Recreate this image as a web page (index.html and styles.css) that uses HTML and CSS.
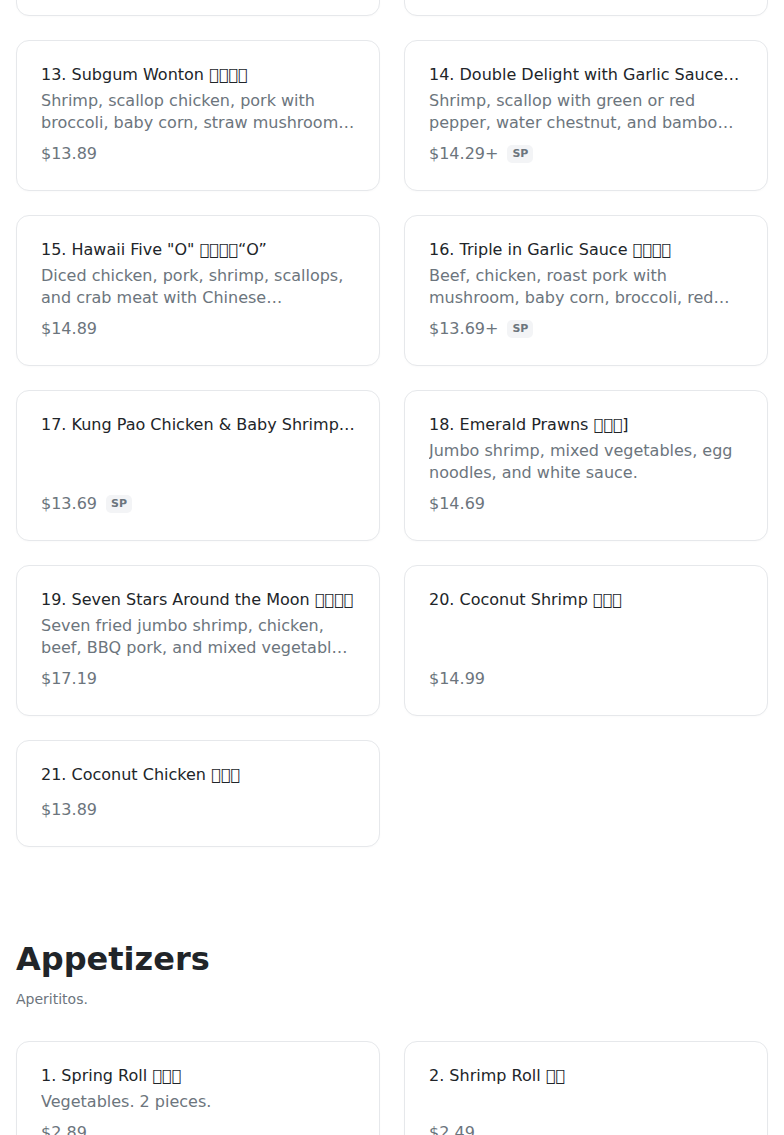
FILE: index.html
```html
<!DOCTYPE html>
<html lang="en">
<head>
<meta charset="utf-8">
<title>Menu</title>
<link rel="stylesheet" href="styles.css">
</head>
<body>
<main class="menu">
  <section class="section section-first">
    <div class="grid">
      <article class="card">
        <h3 class="item-title">11. Sesame Chicken</h3>
        <p class="item-desc">Crispy chicken with sesame seeds in a sweet brown sauce and steamed broccoli.</p>
        <div class="item-price"><span>$13.29</span></div>
      </article>
      <article class="card">
        <h3 class="item-title">12. General Tso's Chicken</h3>
        <p class="item-desc">Chunks of chicken sautéed in a spicy sauce with steamed broccoli.</p>
        <div class="item-price"><span>$13.29</span></div>
      </article>
      <article class="card">
        <h3 class="item-title">13. Subgum Wonton &#xE000;&#xE001;&#xE002;&#xE003;</h3>
        <p class="item-desc">Shrimp, scallop chicken, pork with broccoli, baby corn, straw mushrooms, snow peas and wonton skins.</p>
        <div class="item-price"><span>$13.89</span></div>
      </article>
      <article class="card">
        <h3 class="item-title">14. Double Delight with Garlic Sauce &#xE004;&#xE005;&#xE006;&#xE007;</h3>
        <p class="item-desc">Shrimp, scallop with green or red pepper, water chestnut, and bamboo shoots in garlic sauce.</p>
        <div class="item-price"><span>$14.29+</span><span class="badge">SP</span></div>
      </article>
      <article class="card">
        <h3 class="item-title">15. Hawaii Five "O" &#xE008;&#xE009;&#xE00A;&#xE00B;“O”</h3>
        <p class="item-desc">Diced chicken, pork, shrimp, scallops, and crab meat with Chinese vegetables in brown sauce.</p>
        <div class="item-price"><span>$14.89</span></div>
      </article>
      <article class="card">
        <h3 class="item-title">16. Triple in Garlic Sauce &#xE00C;&#xE00D;&#xE00E;&#xE00F;</h3>
        <p class="item-desc">Beef, chicken, roast pork with mushroom, baby corn, broccoli, red pepper and water chestnuts.</p>
        <div class="item-price"><span>$13.69+</span><span class="badge">SP</span></div>
      </article>
      <article class="card">
        <h3 class="item-title">17. Kung Pao Chicken &amp; Baby Shrimp &#xE010;&#xE011;&#xE012;&#xE013;&#xE014;</h3>
        <div class="item-price"><span>$13.69</span><span class="badge">SP</span></div>
      </article>
      <article class="card">
        <h3 class="item-title">18. Emerald Prawns &#xE015;&#xE016;&#xE017;]</h3>
        <p class="item-desc">Jumbo shrimp, mixed vegetables, egg noodles, and white sauce.</p>
        <div class="item-price"><span>$14.69</span></div>
      </article>
      <article class="card">
        <h3 class="item-title">19. Seven Stars Around the Moon &#xE018;&#xE019;&#xE01A;&#xE01B;</h3>
        <p class="item-desc">Seven fried jumbo shrimp, chicken, beef, BBQ pork, and mixed vegetables in brown sauce.</p>
        <div class="item-price"><span>$17.19</span></div>
      </article>
      <article class="card">
        <h3 class="item-title">20. Coconut Shrimp &#xE01C;&#xE01D;&#xE01E;</h3>
        <div class="item-price"><span>$14.99</span></div>
      </article>
      <article class="card">
        <h3 class="item-title">21. Coconut Chicken &#xE01F;&#xE020;&#xE021;</h3>
        <div class="item-price"><span>$13.89</span></div>
      </article>
    </div>
  </section>

  <section class="section">
    <h2 class="section-title">Appetizers</h2>
    <p class="section-sub">Aperititos.</p>
    <div class="grid">
      <article class="card">
        <h3 class="item-title">1. Spring Roll &#xE022;&#xE023;&#xE024;</h3>
        <p class="item-desc">Vegetables. 2 pieces.</p>
        <div class="item-price"><span>$2.89</span></div>
      </article>
      <article class="card">
        <h3 class="item-title">2. Shrimp Roll &#xE025;&#xE026;</h3>
        <div class="item-price"><span>$2.49</span></div>
      </article>
      <article class="card">
        <h3 class="item-title">3. Egg Roll &#xE027;&#xE028;</h3>
        <div class="item-price"><span>$2.49</span></div>
      </article>
      <article class="card">
        <h3 class="item-title">4. Crab Rangoon &#xE029;&#xE02A;&#xE02B;</h3>
        <div class="item-price"><span>$7.49</span></div>
      </article>
    </div>
  </section>
</main>
</body>
</html>
```

FILE: styles.css
```css
* {
  box-sizing: border-box;
}

html, body {
  margin: 0;
  padding: 0;
  background: #ffffff;
}

body {
  font-family: "DejaVu Sans", sans-serif;
  color: #212529;
  overflow: hidden;
  height: 1135px;
}

.menu {
  padding: 0 16px;
  margin-top: -135px;
}

.section-first {
  margin-bottom: 93px;
}

.grid {
  display: grid;
  grid-template-columns: 1fr 1fr;
  column-gap: 24px;
  row-gap: 24px;
}

.card {
  display: flex;
  flex-direction: column;
  border: 1px solid #e6e8eb;
  border-radius: 13px;
  padding: 24px;
  background: #fff;
  box-shadow: 0 1px 2px rgba(0, 0, 0, 0.02);
  min-width: 0;
}

.item-title {
  margin: 0 0 6px;
  font-size: 16px;
  font-weight: normal;
  line-height: 19px;
  height: 19px;
  color: #212529;
  white-space: nowrap;
  overflow: hidden;
  text-overflow: ellipsis;
}

.item-desc {
  margin: 0;
  font-size: 16px;
  line-height: 22px;
  color: #6c757d;
  display: -webkit-box;
  -webkit-line-clamp: 2;
  -webkit-box-orient: vertical;
  overflow: hidden;
}

.item-price {
  margin-top: auto;
  padding-top: 8px;
  display: flex;
  align-items: center;
  gap: 9px;
  font-size: 16px;
  line-height: 24px;
  color: #6c757d;
}

.badge {
  font-size: 11px;
  font-weight: bold;
  line-height: 14px;
  padding: 2px 5px;
  border-radius: 5px;
  background: #f3f4f6;
  color: #6c757d;
}

.section-title {
  margin: 0 0 11px;
  font-size: 32px;
  font-weight: bold;
  line-height: 1.2;
  color: #212529;
}

.section-sub {
  margin: 0 0 31px;
  font-size: 14px;
  line-height: 21px;
  color: #6c757d;
}
```
